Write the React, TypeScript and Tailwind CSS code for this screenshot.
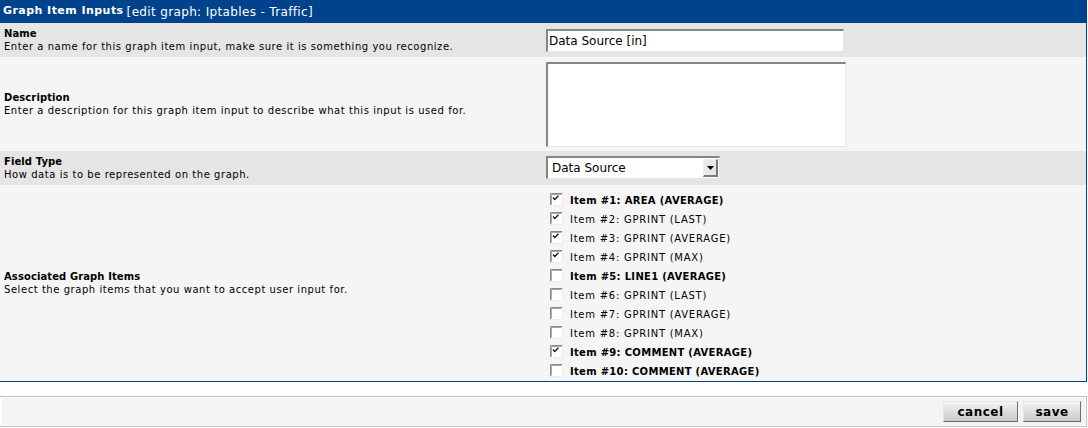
import React from 'react'

interface GraphItem {
  id: number
  label: string
  checked: boolean
  bold: boolean
}

const items: GraphItem[] = [
  { id: 1, label: 'Item #1: AREA (AVERAGE)', checked: true, bold: true },
  { id: 2, label: 'Item #2: GPRINT (LAST)', checked: true, bold: false },
  { id: 3, label: 'Item #3: GPRINT (AVERAGE)', checked: true, bold: false },
  { id: 4, label: 'Item #4: GPRINT (MAX)', checked: true, bold: false },
  { id: 5, label: 'Item #5: LINE1 (AVERAGE)', checked: false, bold: true },
  { id: 6, label: 'Item #6: GPRINT (LAST)', checked: false, bold: false },
  { id: 7, label: 'Item #7: GPRINT (AVERAGE)', checked: false, bold: false },
  { id: 8, label: 'Item #8: GPRINT (MAX)', checked: false, bold: false },
  { id: 9, label: 'Item #9: COMMENT (AVERAGE)', checked: true, bold: true },
  { id: 10, label: 'Item #10: COMMENT (AVERAGE)', checked: false, bold: true },
]

// classic windows style checkbox
function Checkbox({ checked }: { checked: boolean }) {
  return (
    <svg width="13" height="13" viewBox="0 0 13 13" className="shrink-0">
      <rect x="0" y="0" width="13" height="13" fill="#ffffff" />
      <path d="M0.5 12.5 V0.5 H12.5" stroke="#8a8a8a" strokeWidth="1" fill="none" />
      <path d="M1.5 11.5 V1.5 H11.5" stroke="#a8a8a8" strokeWidth="1" fill="none" />
      <path d="M12.5 0.5 V12.5 H0.5" stroke="#ececec" strokeWidth="1" fill="none" />
      {checked && (
        <path d="M3 4.5 L4.8 6.5 L8.5 2.8" stroke="#1a1a1a" strokeWidth="1.4" fill="none" />
      )}
    </svg>
  )
}

function FieldLabel({ title, text }: { title: string; text: string }) {
  return (
    <div className="flex w-[542px] shrink-0 flex-col justify-center pl-[4px]">
      <div className="font-bold leading-[13px] tracking-[0.1px]">{title}</div>
      <div className="leading-[13px] tracking-[0.55px]">{text}</div>
    </div>
  )
}

const inset =
  'border-t-2 border-l-2 border-b border-r border-t-[#858585] border-l-[#858585] border-b-[#e6e6e6] border-r-[#e6e6e6] bg-white'

export default function App() {
  return (
    <div
      className="min-h-screen bg-white text-[10px] text-black"
      style={{ fontFamily: '"DejaVu Sans", Verdana, sans-serif' }}
    >
      {/* main form table */}
      <div className="w-[1087px] border-r border-b border-[#00438c]">
        <div className="flex h-[23px] items-center bg-[#00438c] pl-[3px] text-white">
          <span className="text-[11px] font-bold tracking-[0.45px]">Graph Item Inputs</span>
          <span className="ml-[3px] text-[12px] tracking-[0.35px]">[edit graph: Iptables - Traffic]</span>
        </div>

        {/* Name */}
        <div className="flex bg-[#e5e5e5]">
          <FieldLabel
            title="Name"
            text="Enter a name for this graph item input, make sure it is something you recognize."
          />
          <div className="py-[6px] pl-[4px] pb-[5px]">
            <div className={`flex h-[23px] w-[298px] items-center pl-[1px] text-[12px] ${inset}`}>
              Data Source [in]
            </div>
          </div>
        </div>

        {/* Description */}
        <div className="flex bg-[#f5f5f5]">
          <FieldLabel
            title="Description"
            text="Enter a description for this graph item input to describe what this input is used for."
          />
          <div className="pt-[5px] pb-[4px] pl-[4px]">
            <div className={`h-[85px] w-[300px] ${inset}`} />
          </div>
        </div>

        {/* Field Type */}
        <div className="flex bg-[#e5e5e5]">
          <FieldLabel title="Field Type" text="How data is to be represented on the graph." />
          <div className="pt-[5px] pb-[6px] pl-[4px]">
            <div className={`flex h-[23px] w-[174px] items-center justify-between text-[12px] ${inset}`}>
              <span className="pl-[4px]">Data Source</span>
              <div className="mr-[1px] flex h-[18px] w-[15px] items-center justify-center border-t border-l border-b-2 border-r-2 border-t-[#f0f0f0] border-l-[#f0f0f0] border-b-[#7a7a7a] border-r-[#7a7a7a] bg-[#e8e8e8]">
                <svg width="7" height="4" viewBox="0 0 7 4">
                  <path d="M0 0 H7 L3.5 4 Z" fill="#000" />
                </svg>
              </div>
            </div>
          </div>
        </div>

        {/* Associated Graph Items */}
        <div className="flex bg-[#f5f5f5]">
          <FieldLabel
            title="Associated Graph Items"
            text="Select the graph items that you want to accept user input for."
          />
          <div className="flex flex-col pt-[5px] pb-[1px] pl-[8px]">
            {items.map((item) => (
              <div key={item.id} className="flex h-[19px] items-center">
                <Checkbox checked={item.checked} />
                <span
                  className={`ml-[7px] pt-[2px] ${item.bold ? 'font-bold tracking-[0.3px]' : 'tracking-[0.75px]'}`}
                >
                  {item.label}
                </span>
              </div>
            ))}
          </div>
        </div>
      </div>

      {/* save bar */}
      <div className="mt-[14px] w-[1087px] border-t border-b border-r border-[#bdbdbd] bg-white p-[1px] pl-[2px]">
        <div className="flex justify-end gap-[5px] bg-[#f3f3f3] py-[3px] pr-[4px]">
          <button className="h-[21px] w-[75px] border border-t-[#e6e6e6] border-l-[#e6e6e6] border-b-[#6d6d6d] border-r-[#6d6d6d] bg-gradient-to-b from-[#f4f4f4] to-[#c9c9c9] text-[12px] font-bold tracking-[0.5px]">
            cancel
          </button>
          <button className="h-[21px] w-[58px] border border-t-[#e6e6e6] border-l-[#e6e6e6] border-b-[#6d6d6d] border-r-[#6d6d6d] bg-gradient-to-b from-[#f4f4f4] to-[#c9c9c9] text-[12px] font-bold tracking-[0.5px]">
            save
          </button>
        </div>
      </div>
    </div>
  )
}
